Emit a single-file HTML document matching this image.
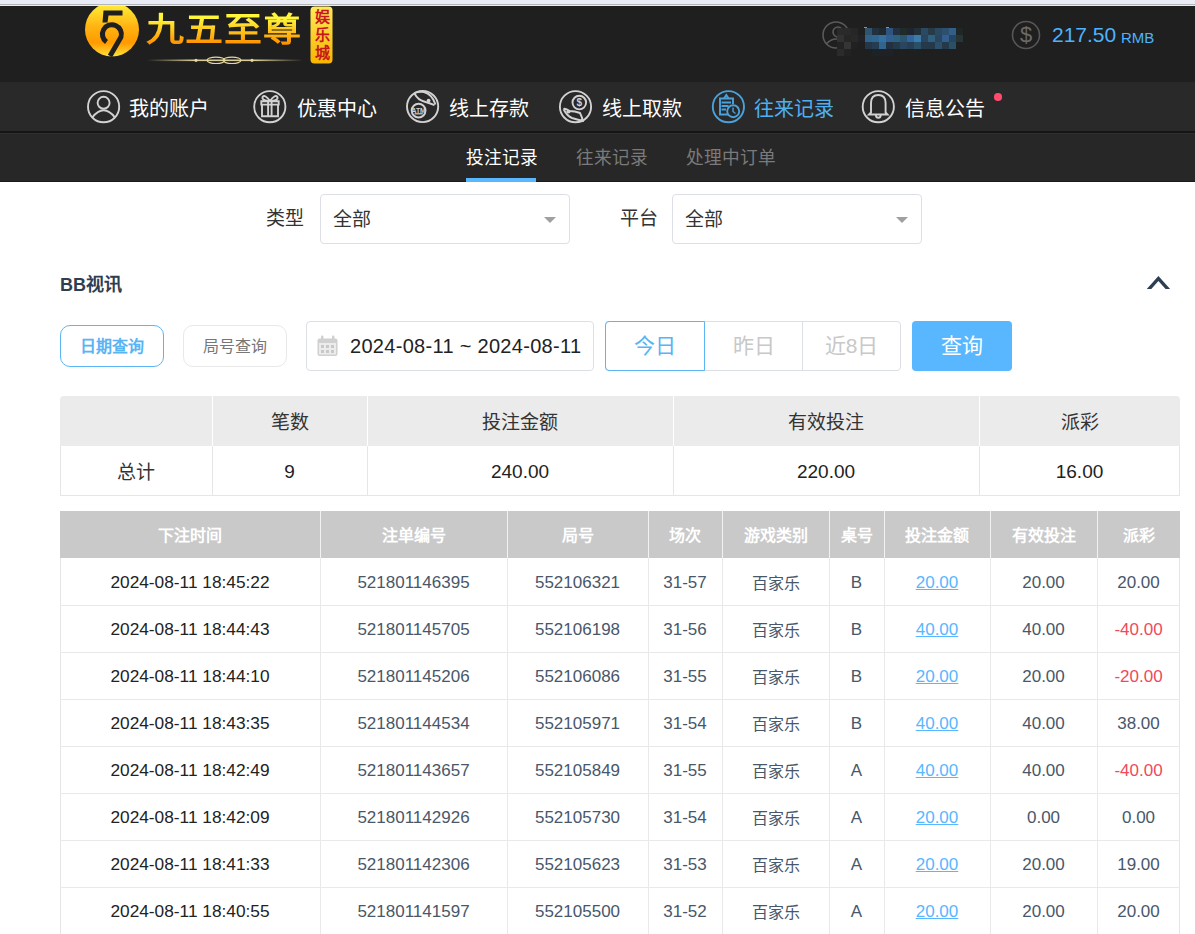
<!DOCTYPE html>
<html lang="zh-CN">
<head>
<meta charset="utf-8">
<style>
*{box-sizing:border-box;}
html,body{margin:0;padding:0;width:1195px;height:934px;overflow:hidden;background:#fff;font-family:"Liberation Sans",sans-serif;}
.abs{position:absolute;}
#strip{left:0;top:0;width:1195px;height:6px;background:#e9ecf5;z-index:5;}
#strip:after{content:"";position:absolute;left:0;top:4px;width:100%;height:1px;background:#b4b5b8;}
#header{left:0;top:6px;width:1195px;height:76px;background:#1f1f1f;}
#nav{left:0;top:82px;width:1195px;height:50px;background:#292929;}
#navline{left:0;top:131px;width:1195px;height:2px;background:#151515;}
#subnav{left:0;top:133px;width:1195px;height:49px;background:#272727;border-top:1px solid #2f2f2f;border-bottom:1px solid #1a1a1a;}
.navtxt{position:absolute;top:96px;font-size:20px;line-height:26px;color:#fff;white-space:nowrap;}
.subtxt{position:absolute;top:146px;font-size:17.7px;line-height:24px;color:#7a7a7a;white-space:nowrap;}
.lbl{position:absolute;font-size:19px;line-height:24px;color:#333;white-space:nowrap;}
.sel{position:absolute;top:194px;height:50px;border:1px solid #dcdfe6;border-radius:4px;background:#fff;}
.sel span{position:absolute;left:12px;top:13px;font-size:19px;line-height:24px;color:#333;}
.sel i{position:absolute;right:13px;top:22px;width:0;height:0;border-left:6.5px solid transparent;border-right:6.5px solid transparent;border-top:6px solid #a0a0a0;}
.th{position:absolute;height:47px;line-height:49px;text-align:center;color:#fff;font-weight:bold;font-size:16px;white-space:nowrap;}
.td{position:absolute;height:47px;line-height:49px;text-align:center;color:#48576a;font-size:17px;white-space:nowrap;}
.tdk{color:#222;font-size:17.3px;}
.lnk{color:#58b7ff;text-decoration:underline;}
.red{color:#f04a5b;}
.cj{font-size:16px;line-height:51px;}
.sh{position:absolute;top:398px;height:50px;line-height:50px;text-align:center;color:#333;font-size:19px;}
.sb{position:absolute;top:447px;height:50px;line-height:50px;text-align:center;color:#222;font-size:19px;}
.btn{position:absolute;text-align:center;white-space:nowrap;}

</style>
</head>
<body>
<div id="strip" class="abs"></div>
<div id="header" class="abs"></div>
<div id="nav" class="abs"></div>
<div id="navline" class="abs"></div>
<div id="subnav" class="abs"></div>

<!-- logo -->
<svg class="abs" style="left:0;top:0" width="400" height="82" viewBox="0 0 400 82">
 <defs>
  <linearGradient id="gc" x1="0" y1="0" x2="0" y2="1">
   <stop offset="0" stop-color="#fff23a"/><stop offset="0.45" stop-color="#ffb312"/><stop offset="0.75" stop-color="#ff9a00"/><stop offset="1" stop-color="#ffe23a"/>
  </linearGradient>
  <linearGradient id="gb" x1="0" y1="0" x2="0" y2="1">
   <stop offset="0" stop-color="#ffe95a"/><stop offset="1" stop-color="#f7b500"/>
  </linearGradient>
  <linearGradient id="gl" x1="0" y1="0" x2="1" y2="0">
   <stop offset="0" stop-color="#c9bb8a" stop-opacity="0"/><stop offset="0.3" stop-color="#d9cc98"/><stop offset="0.7" stop-color="#d9cc98"/><stop offset="1" stop-color="#c9bb8a" stop-opacity="0"/>
  </linearGradient>
 </defs>
 <circle cx="112" cy="29.5" r="27" fill="url(#gc)"/>
 <path d="M103.5 10.5 H122.5 V15.5 H108.5 L107.5 22.5 H102.5 Z" fill="#1f1f1f"/>
 <path d="M106.5 42 A 9.5 9.5 0 1 1 121 37 L 110 56" fill="none" stroke="#1f1f1f" stroke-width="5"/>
 <rect x="147" y="59.5" width="156" height="1.6" fill="url(#gl)"/>
 <ellipse cx="216" cy="60.3" rx="9" ry="3.2" fill="none" stroke="#e6d9a0" stroke-width="1.2"/>
 <ellipse cx="232" cy="60.3" rx="9" ry="3.2" fill="none" stroke="#e6d9a0" stroke-width="1.2"/>
 <circle cx="196" cy="60.3" r="1.6" fill="#e6d9a0"/><circle cx="252" cy="60.3" r="1.6" fill="#e6d9a0"/>
 <rect x="310.5" y="6.5" width="22" height="57" rx="4" fill="url(#gb)"/>
</svg>
<div class="abs" style="left:146px;top:8px;font-family:'Liberation Serif',serif;font-weight:bold;font-size:38px;line-height:44px;letter-spacing:1px;white-space:nowrap;transform:scaleY(0.88);background:linear-gradient(#fff53a 20%,#ffc01a 55%,#ff9200 85%);-webkit-background-clip:text;background-clip:text;color:transparent;">九五至尊</div>
<div class="abs" style="left:311px;top:8px;width:22px;font-family:'Liberation Serif',serif;font-weight:bold;font-size:15px;line-height:18px;text-align:center;color:#c8161d;">娱<br>乐<br>城</div>

<!-- user area -->
<svg class="abs" style="left:800px;top:0" width="395" height="82" viewBox="800 0 395 82">
 <circle cx="836" cy="35" r="13" fill="none" stroke="#5a5a5a" stroke-width="1.6"/>
 <circle cx="838" cy="32" r="5" fill="none" stroke="#5a5a5a" stroke-width="1.6"/>
 <path d="M826 44 Q836 34 846 44" fill="none" stroke="#5a5a5a" stroke-width="1.6"/>
 <circle cx="1026" cy="35" r="13.5" fill="none" stroke="#575757" stroke-width="1.6"/>
</svg>
<div class="abs" style="left:1016px;top:21px;width:20px;text-align:center;font-size:22px;line-height:28px;color:#6a6a6a">$</div>
<div class="abs" style="left:837px;top:28px;width:7px;height:7px;background:#2a2a2a"></div>
<div class="abs" style="left:844px;top:28px;width:7px;height:7px;background:#2a2a2a"></div>
<div class="abs" style="left:851px;top:28px;width:7px;height:7px;background:#262626"></div>
<div class="abs" style="left:865px;top:28px;width:7px;height:7px;background:#2e5470"></div>
<div class="abs" style="left:872px;top:28px;width:7px;height:7px;background:#223140"></div>
<div class="abs" style="left:879px;top:28px;width:7px;height:7px;background:#1f2a2e"></div>
<div class="abs" style="left:886px;top:28px;width:7px;height:7px;background:#2d5580"></div>
<div class="abs" style="left:893px;top:28px;width:7px;height:7px;background:#223040"></div>
<div class="abs" style="left:900px;top:28px;width:7px;height:7px;background:#1f2a2a"></div>
<div class="abs" style="left:907px;top:28px;width:7px;height:7px;background:#1e2530"></div>
<div class="abs" style="left:914px;top:28px;width:7px;height:7px;background:#22303c"></div>
<div class="abs" style="left:921px;top:28px;width:7px;height:7px;background:#2a4a62"></div>
<div class="abs" style="left:928px;top:28px;width:7px;height:7px;background:#263a48"></div>
<div class="abs" style="left:935px;top:28px;width:7px;height:7px;background:#2a4a62"></div>
<div class="abs" style="left:942px;top:28px;width:7px;height:7px;background:#2d5070"></div>
<div class="abs" style="left:949px;top:28px;width:7px;height:7px;background:#325f88"></div>
<div class="abs" style="left:956px;top:28px;width:7px;height:7px;background:#1f2626"></div>
<div class="abs" style="left:837px;top:35px;width:7px;height:7px;background:#323232"></div>
<div class="abs" style="left:844px;top:35px;width:7px;height:7px;background:#262626"></div>
<div class="abs" style="left:851px;top:35px;width:7px;height:7px;background:#282828"></div>
<div class="abs" style="left:858px;top:35px;width:7px;height:7px;background:#212126"></div>
<div class="abs" style="left:865px;top:35px;width:7px;height:7px;background:#30628a"></div>
<div class="abs" style="left:872px;top:35px;width:7px;height:7px;background:#2f6690"></div>
<div class="abs" style="left:879px;top:35px;width:7px;height:7px;background:#3570a0"></div>
<div class="abs" style="left:886px;top:35px;width:7px;height:7px;background:#30608f"></div>
<div class="abs" style="left:893px;top:35px;width:7px;height:7px;background:#2e6080"></div>
<div class="abs" style="left:900px;top:35px;width:7px;height:7px;background:#2a5570"></div>
<div class="abs" style="left:907px;top:35px;width:7px;height:7px;background:#3265a0"></div>
<div class="abs" style="left:914px;top:35px;width:7px;height:7px;background:#3b7aab"></div>
<div class="abs" style="left:921px;top:35px;width:7px;height:7px;background:#2a4560"></div>
<div class="abs" style="left:928px;top:35px;width:7px;height:7px;background:#30607f"></div>
<div class="abs" style="left:935px;top:35px;width:7px;height:7px;background:#2a4560"></div>
<div class="abs" style="left:942px;top:35px;width:7px;height:7px;background:#325f90"></div>
<div class="abs" style="left:949px;top:35px;width:7px;height:7px;background:#264560"></div>
<div class="abs" style="left:956px;top:35px;width:7px;height:7px;background:#263535"></div>
<div class="abs" style="left:837px;top:42px;width:7px;height:7px;background:#232323"></div>
<div class="abs" style="left:844px;top:42px;width:7px;height:7px;background:#353535"></div>
<div class="abs" style="left:851px;top:42px;width:7px;height:7px;background:#212121"></div>
<div class="abs" style="left:865px;top:42px;width:7px;height:7px;background:#23364a"></div>
<div class="abs" style="left:872px;top:42px;width:7px;height:7px;background:#253d50"></div>
<div class="abs" style="left:879px;top:42px;width:7px;height:7px;background:#30658f"></div>
<div class="abs" style="left:886px;top:42px;width:7px;height:7px;background:#22303f"></div>
<div class="abs" style="left:893px;top:42px;width:7px;height:7px;background:#243a48"></div>
<div class="abs" style="left:900px;top:42px;width:7px;height:7px;background:#2a4560"></div>
<div class="abs" style="left:907px;top:42px;width:7px;height:7px;background:#263f55"></div>
<div class="abs" style="left:914px;top:42px;width:7px;height:7px;background:#2a4f68"></div>
<div class="abs" style="left:921px;top:42px;width:7px;height:7px;background:#243a4a"></div>
<div class="abs" style="left:928px;top:42px;width:7px;height:7px;background:#243a4a"></div>
<div class="abs" style="left:935px;top:42px;width:7px;height:7px;background:#2d4f6a"></div>
<div class="abs" style="left:942px;top:42px;width:7px;height:7px;background:#243a4a"></div>
<div class="abs" style="left:949px;top:42px;width:7px;height:7px;background:#2a4f66"></div>
<div class="abs" style="left:837px;top:49px;width:7px;height:7px;background:#2b2b2b"></div>
<div class="abs" style="left:844px;top:49px;width:7px;height:7px;background:#222222"></div>
<div class="abs" style="left:872px;top:49px;width:7px;height:7px;background:#1c2328"></div>
<div class="abs" style="left:879px;top:49px;width:7px;height:7px;background:#1e2226"></div>
<div class="abs" style="left:886px;top:49px;width:7px;height:7px;background:#1e2226"></div>
<div class="abs" style="left:864px;top:26.5px;width:3px;height:1.5px;background:#3aaaf0"></div>
<div class="abs" style="left:886px;top:26.5px;width:3px;height:1.5px;background:#3aaaf0"></div>
<div class="abs" style="left:1052px;top:23px;font-size:21px;line-height:24px;color:#4db3ff;white-space:nowrap">217.50</div>
<div class="abs" style="left:1121px;top:29px;font-size:15px;line-height:18px;color:#4db3ff;white-space:nowrap">RMB</div>

<!-- nav icons -->
<svg class="abs" style="left:0;top:82px" width="1195" height="50" viewBox="0 82 1195 50">
 <g fill="none" stroke="#d2d2d2" stroke-width="1.9">
  <circle cx="103.6" cy="106.7" r="15.6"/>
  <circle cx="103.6" cy="102.8" r="6"/>
  <path d="M92.2 117.5 Q103.6 103 115 117.5"/>
  <circle cx="269.8" cy="106.7" r="15.6"/>
  <path d="M261.3 101.2 H278.7 V104.6 H261.3 Z M262 104.6 V116.2 H278 V104.6 M268.1 101.2 V116.2 M271.6 101.2 V116.2 M270 101 Q265 94 262.5 97 Q261.5 100 268 101 M270 101 Q275 94 277.5 97 Q278.5 100 272 101"/>
  <circle cx="422.6" cy="106.5" r="15.6"/>
  <circle cx="418.6" cy="110.6" r="6.9"/>
  <path d="M414.3 93.2 Q419 91.2 424 92 Q432 94 435.5 104.5 M414.5 93.5 Q418 100 424 101.5 Q430 103 434.5 105.2"/>
  <path d="M414.5 113.8 H422.8" stroke-width="1.2"/>
  <circle cx="575.5" cy="106.7" r="15.6"/>
  <circle cx="579.3" cy="102.6" r="6.8"/>
  <path d="M563.5 109 Q567 116 572 118 Q578 120 584 121 M563.5 109 Q566 108 569 111 Q575 111 580 113 Q582 117 583 121"/>
  <circle cx="878.3" cy="106.7" r="15.6"/>
  <path d="M871 112.5 V103 Q871 95 878.3 95 Q885.6 95 885.6 103 V112.5 L887.5 114.5 H869 Z M875.8 114.5 Q875.8 117.8 878.3 117.8 Q880.8 117.8 880.8 114.5"/>
 </g>
 <circle cx="568.5" cy="111.5" r="2.1" fill="#d2d2d2"/>
 <text x="579.3" y="106.3" font-size="10" font-weight="bold" fill="#d2d2d2" text-anchor="middle" font-family="Liberation Sans">$</text>
 <circle cx="428.6" cy="100.6" r="1.9" fill="#d2d2d2"/>
 <text x="418.6" y="113" font-size="6.8" font-weight="bold" fill="#d2d2d2" text-anchor="middle" font-family="Liberation Sans">ATM</text>
 <g fill="none" stroke="#4aa2dd" stroke-width="1.9">
  <circle cx="728.4" cy="106.7" r="15.6"/>
  <path d="M728 114.5 H720 V98.5 H733 V104"/>
  <path d="M724 98.5 L726.3 95 L728.6 98.5"/>
  <path d="M721.5 102.5 H731 M721.5 106 H728.5 M721.5 109.5 H726"/>
  <circle cx="733.2" cy="111.2" r="6"/>
  <path d="M733 107.5 V111.5 L735.5 113.5" stroke-width="1.4"/>
 </g>
</svg>

<!-- nav texts -->
<div class="navtxt" style="left:129px">我的账户</div>
<div class="navtxt" style="left:297px">优惠中心</div>
<div class="navtxt" style="left:449px">线上存款</div>
<div class="navtxt" style="left:602px">线上取款</div>
<div class="navtxt" style="left:754px;color:#4fb0f0">往来记录</div>
<div class="navtxt" style="left:905px">信息公告</div>
<div class="abs" style="left:994px;top:93px;width:7.5px;height:7.5px;border-radius:50%;background:#ff4b6e"></div>

<!-- sub nav -->
<div class="subtxt" style="left:466px;color:#fff">投注记录</div>
<div class="abs" style="left:466px;top:178px;width:70px;height:4px;background:#58b7ff"></div>
<div class="subtxt" style="left:576px">往来记录</div>
<div class="subtxt" style="left:686px">处理中订单</div>

<!-- filters -->
<div class="lbl" style="left:266px;top:207px">类型</div>
<div class="sel" style="left:320px;width:250px"><span>全部</span><i></i></div>
<div class="lbl" style="left:620px;top:207px">平台</div>
<div class="sel" style="left:672px;width:250px"><span>全部</span><i></i></div>

<!-- section title -->
<div class="abs" style="left:60px;top:273px;font-size:18px;line-height:24px;font-weight:bold;color:#2f3e50;white-space:nowrap">BB视讯</div>
<svg class="abs" style="left:1140px;top:270px" width="40" height="25" viewBox="1140 270 40 25">
 <polygon points="1146.8,289 1158.4,276 1170.1,289 1165.6,289 1158.4,281 1151.3,289" fill="#2c3e50"/>
</svg>

<!-- buttons row -->
<div class="btn" style="left:60px;top:325px;width:104px;height:42px;border:1px solid #5cb6f5;border-radius:10px;line-height:42px;font-size:16px;font-weight:bold;color:#58b4f5">日期查询</div>
<div class="btn" style="left:183px;top:325px;width:104px;height:42px;border:1px solid #e8e8e8;border-radius:10px;line-height:42px;font-size:16px;color:#777">局号查询</div>
<div class="abs" style="left:306px;top:321px;width:288px;height:50px;border:1px solid #dcdfe6;border-radius:4px"></div>
<svg class="abs" style="left:316px;top:334px" width="24" height="24" viewBox="316 334 24 24">
 <rect x="317.5" y="338.5" width="20" height="17.5" rx="2" fill="#d0d0d0"/>
 <rect x="319" y="343" width="17" height="11.5" fill="#ececec"/>
 <rect x="321" y="335.5" width="2.4" height="5" rx="1" fill="#d0d0d0"/>
 <rect x="332" y="335.5" width="2.4" height="5" rx="1" fill="#d0d0d0"/>
 <g fill="#c8c8c8"><rect x="321" y="345" width="3" height="3"/><rect x="326" y="345" width="3" height="3"/><rect x="331" y="345" width="3" height="3"/><rect x="321" y="350" width="3" height="3"/><rect x="326" y="350" width="3" height="3"/><rect x="331" y="350" width="3" height="3"/></g>
</svg>
<div class="abs" style="left:350px;top:334px;font-size:20px;line-height:24px;letter-spacing:0.3px;color:#222;white-space:nowrap">2024-08-11 ~ 2024-08-11</div>
<div class="abs" style="left:605px;top:321px;width:296px;height:50px;border:1px solid #dcdfe6;border-radius:4px"></div>
<div class="abs" style="left:802px;top:321px;width:1px;height:50px;background:#dcdfe6"></div>
<div class="btn" style="left:605px;top:321px;width:100px;height:50px;border:1px solid #5cb6f5;border-radius:4px 0 0 4px;line-height:48px;font-size:21px;color:#58b4f5">今日</div>
<div class="btn" style="left:705px;top:321px;width:97px;height:50px;line-height:50px;font-size:21px;color:#c8c8c8">昨日</div>
<div class="btn" style="left:802px;top:321px;width:99px;height:50px;line-height:50px;font-size:21px;color:#c8c8c8">近8日</div>
<div class="btn" style="left:912px;top:321px;width:100px;height:50px;border-radius:4px;background:#58b7ff;line-height:50px;font-size:21px;color:#fff">查询</div>

<!-- summary table -->
<div class="abs" style="left:60px;top:396px;width:1120px;height:50px;background:#ebebeb;border-radius:4px 4px 0 0"></div>
<div class="abs" style="left:60px;top:446px;width:1120px;height:50px;border:1px solid #e6e6e6;border-top:none"></div>
<div class="abs" style="left:212px;top:396px;width:1px;height:50px;background:#fff"></div>
<div class="abs" style="left:367px;top:396px;width:1px;height:50px;background:#fff"></div>
<div class="abs" style="left:673px;top:396px;width:1px;height:50px;background:#fff"></div>
<div class="abs" style="left:979px;top:396px;width:1px;height:50px;background:#fff"></div>
<div class="abs" style="left:212px;top:446px;width:1px;height:50px;background:#e6e6e6"></div>
<div class="abs" style="left:367px;top:446px;width:1px;height:50px;background:#e6e6e6"></div>
<div class="abs" style="left:673px;top:446px;width:1px;height:50px;background:#e6e6e6"></div>
<div class="abs" style="left:979px;top:446px;width:1px;height:50px;background:#e6e6e6"></div>
<div class="sh" style="left:212px;width:155px">笔数</div>
<div class="sh" style="left:367px;width:306px">投注金额</div>
<div class="sh" style="left:673px;width:306px">有效投注</div>
<div class="sh" style="left:979px;width:201px">派彩</div>
<div class="sb" style="left:60px;top:448px;width:152px;color:#333">总计</div>
<div class="sb" style="left:212px;width:155px">9</div>
<div class="sb" style="left:367px;width:306px">240.00</div>
<div class="sb" style="left:673px;width:306px">220.00</div>
<div class="sb" style="left:979px;width:201px">16.00</div>
<div class="abs" style="left:60px;top:511px;width:1120px;height:47px;background:#c9c9c9"></div>
<div class="th" style="left:60px;top:511px;width:260px">下注时间</div>
<div class="abs" style="left:320px;top:511px;width:1px;height:47px;background:#f2f2f2"></div>
<div class="th" style="left:320px;top:511px;width:187px">注单编号</div>
<div class="abs" style="left:507px;top:511px;width:1px;height:47px;background:#f2f2f2"></div>
<div class="th" style="left:507px;top:511px;width:141px">局号</div>
<div class="abs" style="left:648px;top:511px;width:1px;height:47px;background:#f2f2f2"></div>
<div class="th" style="left:648px;top:511px;width:74px">场次</div>
<div class="abs" style="left:722px;top:511px;width:1px;height:47px;background:#f2f2f2"></div>
<div class="th" style="left:722px;top:511px;width:107px">游戏类别</div>
<div class="abs" style="left:829px;top:511px;width:1px;height:47px;background:#f2f2f2"></div>
<div class="th" style="left:829px;top:511px;width:55px">桌号</div>
<div class="abs" style="left:884px;top:511px;width:1px;height:47px;background:#f2f2f2"></div>
<div class="th" style="left:884px;top:511px;width:106px">投注金额</div>
<div class="abs" style="left:990px;top:511px;width:1px;height:47px;background:#f2f2f2"></div>
<div class="th" style="left:990px;top:511px;width:107px">有效投注</div>
<div class="abs" style="left:1097px;top:511px;width:1px;height:47px;background:#f2f2f2"></div>
<div class="th" style="left:1097px;top:511px;width:83px">派彩</div>
<div class="abs" style="left:60px;top:558px;width:1120px;height:376px;border-left:1px solid #e6e6e6;border-right:1px solid #e6e6e6"></div>
<div class="abs" style="left:320px;top:558px;width:1px;height:376px;background:#e9e9e9"></div>
<div class="abs" style="left:507px;top:558px;width:1px;height:376px;background:#e9e9e9"></div>
<div class="abs" style="left:648px;top:558px;width:1px;height:376px;background:#e9e9e9"></div>
<div class="abs" style="left:722px;top:558px;width:1px;height:376px;background:#e9e9e9"></div>
<div class="abs" style="left:829px;top:558px;width:1px;height:376px;background:#e9e9e9"></div>
<div class="abs" style="left:884px;top:558px;width:1px;height:376px;background:#e9e9e9"></div>
<div class="abs" style="left:990px;top:558px;width:1px;height:376px;background:#e9e9e9"></div>
<div class="abs" style="left:1097px;top:558px;width:1px;height:376px;background:#e9e9e9"></div>
<div class="td tdk" style="left:60px;top:558px;width:260px">2024-08-11 18:45:22</div>
<div class="td" style="left:320px;top:558px;width:187px">521801146395</div>
<div class="td" style="left:507px;top:558px;width:141px">552106321</div>
<div class="td" style="left:648px;top:558px;width:74px">31-57</div>
<div class="td cj" style="left:722px;top:558px;width:107px">百家乐</div>
<div class="td" style="left:829px;top:558px;width:55px">B</div>
<div class="td lnk" style="left:884px;top:558px;width:106px">20.00</div>
<div class="td" style="left:990px;top:558px;width:107px">20.00</div>
<div class="td" style="left:1097px;top:558px;width:83px">20.00</div>
<div class="abs" style="left:60px;top:605px;width:1120px;height:1px;background:#e9e9e9"></div>
<div class="td tdk" style="left:60px;top:605px;width:260px">2024-08-11 18:44:43</div>
<div class="td" style="left:320px;top:605px;width:187px">521801145705</div>
<div class="td" style="left:507px;top:605px;width:141px">552106198</div>
<div class="td" style="left:648px;top:605px;width:74px">31-56</div>
<div class="td cj" style="left:722px;top:605px;width:107px">百家乐</div>
<div class="td" style="left:829px;top:605px;width:55px">B</div>
<div class="td lnk" style="left:884px;top:605px;width:106px">40.00</div>
<div class="td" style="left:990px;top:605px;width:107px">40.00</div>
<div class="td red" style="left:1097px;top:605px;width:83px">-40.00</div>
<div class="abs" style="left:60px;top:652px;width:1120px;height:1px;background:#e9e9e9"></div>
<div class="td tdk" style="left:60px;top:652px;width:260px">2024-08-11 18:44:10</div>
<div class="td" style="left:320px;top:652px;width:187px">521801145206</div>
<div class="td" style="left:507px;top:652px;width:141px">552106086</div>
<div class="td" style="left:648px;top:652px;width:74px">31-55</div>
<div class="td cj" style="left:722px;top:652px;width:107px">百家乐</div>
<div class="td" style="left:829px;top:652px;width:55px">B</div>
<div class="td lnk" style="left:884px;top:652px;width:106px">20.00</div>
<div class="td" style="left:990px;top:652px;width:107px">20.00</div>
<div class="td red" style="left:1097px;top:652px;width:83px">-20.00</div>
<div class="abs" style="left:60px;top:699px;width:1120px;height:1px;background:#e9e9e9"></div>
<div class="td tdk" style="left:60px;top:699px;width:260px">2024-08-11 18:43:35</div>
<div class="td" style="left:320px;top:699px;width:187px">521801144534</div>
<div class="td" style="left:507px;top:699px;width:141px">552105971</div>
<div class="td" style="left:648px;top:699px;width:74px">31-54</div>
<div class="td cj" style="left:722px;top:699px;width:107px">百家乐</div>
<div class="td" style="left:829px;top:699px;width:55px">B</div>
<div class="td lnk" style="left:884px;top:699px;width:106px">40.00</div>
<div class="td" style="left:990px;top:699px;width:107px">40.00</div>
<div class="td" style="left:1097px;top:699px;width:83px">38.00</div>
<div class="abs" style="left:60px;top:746px;width:1120px;height:1px;background:#e9e9e9"></div>
<div class="td tdk" style="left:60px;top:746px;width:260px">2024-08-11 18:42:49</div>
<div class="td" style="left:320px;top:746px;width:187px">521801143657</div>
<div class="td" style="left:507px;top:746px;width:141px">552105849</div>
<div class="td" style="left:648px;top:746px;width:74px">31-55</div>
<div class="td cj" style="left:722px;top:746px;width:107px">百家乐</div>
<div class="td" style="left:829px;top:746px;width:55px">A</div>
<div class="td lnk" style="left:884px;top:746px;width:106px">40.00</div>
<div class="td" style="left:990px;top:746px;width:107px">40.00</div>
<div class="td red" style="left:1097px;top:746px;width:83px">-40.00</div>
<div class="abs" style="left:60px;top:793px;width:1120px;height:1px;background:#e9e9e9"></div>
<div class="td tdk" style="left:60px;top:793px;width:260px">2024-08-11 18:42:09</div>
<div class="td" style="left:320px;top:793px;width:187px">521801142926</div>
<div class="td" style="left:507px;top:793px;width:141px">552105730</div>
<div class="td" style="left:648px;top:793px;width:74px">31-54</div>
<div class="td cj" style="left:722px;top:793px;width:107px">百家乐</div>
<div class="td" style="left:829px;top:793px;width:55px">A</div>
<div class="td lnk" style="left:884px;top:793px;width:106px">20.00</div>
<div class="td" style="left:990px;top:793px;width:107px">0.00</div>
<div class="td" style="left:1097px;top:793px;width:83px">0.00</div>
<div class="abs" style="left:60px;top:840px;width:1120px;height:1px;background:#e9e9e9"></div>
<div class="td tdk" style="left:60px;top:840px;width:260px">2024-08-11 18:41:33</div>
<div class="td" style="left:320px;top:840px;width:187px">521801142306</div>
<div class="td" style="left:507px;top:840px;width:141px">552105623</div>
<div class="td" style="left:648px;top:840px;width:74px">31-53</div>
<div class="td cj" style="left:722px;top:840px;width:107px">百家乐</div>
<div class="td" style="left:829px;top:840px;width:55px">A</div>
<div class="td lnk" style="left:884px;top:840px;width:106px">20.00</div>
<div class="td" style="left:990px;top:840px;width:107px">20.00</div>
<div class="td" style="left:1097px;top:840px;width:83px">19.00</div>
<div class="abs" style="left:60px;top:887px;width:1120px;height:1px;background:#e9e9e9"></div>
<div class="td tdk" style="left:60px;top:887px;width:260px">2024-08-11 18:40:55</div>
<div class="td" style="left:320px;top:887px;width:187px">521801141597</div>
<div class="td" style="left:507px;top:887px;width:141px">552105500</div>
<div class="td" style="left:648px;top:887px;width:74px">31-52</div>
<div class="td cj" style="left:722px;top:887px;width:107px">百家乐</div>
<div class="td" style="left:829px;top:887px;width:55px">A</div>
<div class="td lnk" style="left:884px;top:887px;width:106px">20.00</div>
<div class="td" style="left:990px;top:887px;width:107px">20.00</div>
<div class="td" style="left:1097px;top:887px;width:83px">20.00</div>
</body>
</html>
